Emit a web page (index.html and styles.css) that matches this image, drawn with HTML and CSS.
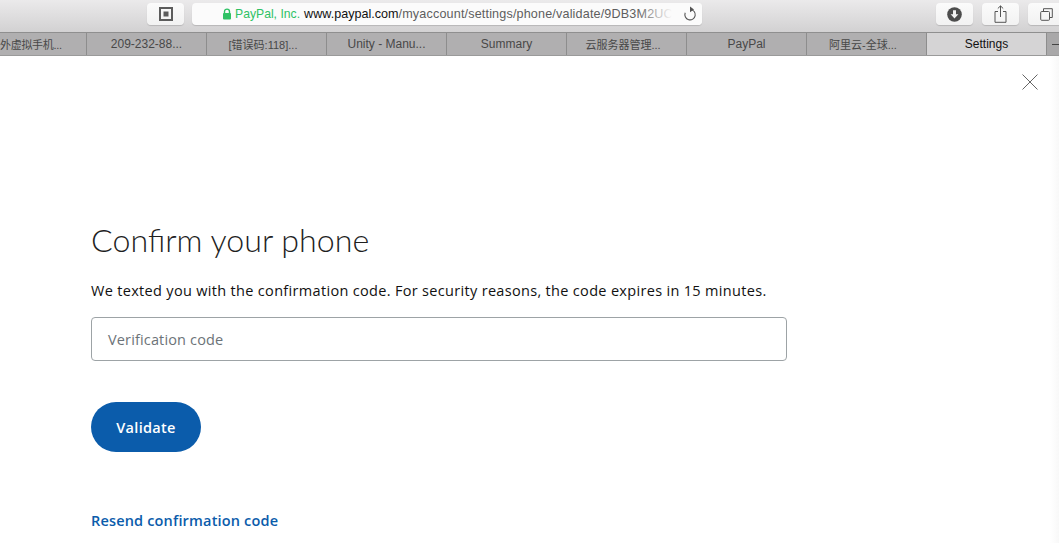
FILE: index.html
```html
<!DOCTYPE html>
<html lang="en">
<head>
<meta charset="utf-8">
<title>Settings</title>
<link rel="stylesheet" href="styles.css">
</head>
<body>
<header class="toolbar">
  <button class="tool sidebar-btn" aria-label="Sidebar">
    <svg width="14" height="14" viewBox="0 0 14 14"><rect x="1" y="1" width="12" height="12" fill="none" stroke="#5c5c5c" stroke-width="2"/><rect x="4.500" y="4.500" width="5" height="5" fill="#5c5c5c"/></svg>
  </button>
  <div class="address">
    <svg class="lock" width="10" height="12" viewBox="0 0 10 12"><path d="M2.500 6V3.600a2.500 2.500 0 0 1 5 0V6" fill="none" stroke="#2fc265" stroke-width="1.400"/><rect x="1" y="5" width="8" height="6.500" rx="1" fill="#2fc265"/></svg>
    <span class="org">PayPal, Inc.</span>
    <span class="url"><b>www.paypal.com</b>/myaccount/settings/phone/validate/9DB3M2UC</span>
    <span class="fade"></span>
    <svg class="reload" width="14" height="16" viewBox="0 0 14 16"><path d="M7.500 3.500a5.200 5.200 0 1 1-5.300 3.300" fill="none" stroke="#555" stroke-width="1.100"/><path d="M7 .6v5.600l4-2.800z" fill="#555"/></svg>
  </div>
  <div class="tools-right">
    <button class="tool" aria-label="Downloads">
      <svg width="15" height="15" viewBox="0 0 15 15"><circle cx="7.500" cy="7.500" r="7.300" fill="#4d4d4d"/><path d="M6 3.200h3v4h2.400L7.500 11.600 3.600 7.200H6z" fill="#f2f2f2"/></svg>
    </button>
    <button class="tool" aria-label="Share">
      <svg width="13" height="18" viewBox="0 0 13 18"><path d="M4 6.500H1v10.800h11V6.500H9M6.500 12V1M3.800 3.500 6.500 .9l2.700 2.600" fill="none" stroke="#555" stroke-width="1"/></svg>
    </button>
    <button class="tool" aria-label="Tabs">
      <svg width="13" height="13" viewBox="0 0 13 13"><path d="M3.500 3V.7h8.800v8.800H9.500" fill="none" stroke="#555" stroke-width="1"/><rect x=".7" y="3.500" width="8.800" height="8.800" rx="1" fill="none" stroke="#555" stroke-width="1"/></svg>
    </button>
  </div>
</header>
<nav class="tabs">
  <div class="tab tab-first tab-cjk">外虚拟手机...</div>
  <div class="tab">209-232-88...</div>
  <div class="tab tab-cjk">[错误码:118]...</div>
  <div class="tab">Unity - Manu...</div>
  <div class="tab">Summary</div>
  <div class="tab tab-cjk">云服务器管理...</div>
  <div class="tab">PayPal</div>
  <div class="tab tab-cjk">阿里云-全球...</div>
  <div class="tab tab-active">Settings</div>
  <div class="tab-plus"><span class="plus-bar"></span></div>
</nav>
<main class="page">
  <svg class="close" width="16" height="16" viewBox="0 0 16 16"><path d="M.5.500l15 15M15.500.500l-15 15" stroke="#666" stroke-width="1" fill="none"/></svg>
  <h1>Confirm your phone</h1>
  <p class="desc">We texted you with the confirmation code. For security reasons, the code expires in 15 minutes.</p>
  <div class="field">Verification code</div>
  <button class="validate">Validate</button>
  <a class="resend" href="#">Resend confirmation code</a>
</main>
</body>
</html>
```
FILE: styles.css
```css
* { box-sizing: border-box; }
html, body { margin: 0; height: 100%; overflow: hidden; }
body { width: 1059px; height: 543px; background: #fff; font-family: "Open Sans", "Noto Sans CJK SC", sans-serif; display: flex; flex-direction: column; }
button { font-family: inherit; border: 0; padding: 0; }

.toolbar { height: 32px; flex: none; display: flex; align-items: flex-start; padding: 3px 0 0 147px; background: linear-gradient(#ebeaeb, #d2d1d2); overflow: hidden; }
.tool { width: 37px; height: 22px; background: linear-gradient(#fbfbfb, #f2f2f2); border-radius: 4px; box-shadow: 0 1px 1px rgba(0,0,0,.15); display: flex; align-items: center; justify-content: center; flex: none; }
.address { width: 510px; height: 22px; margin-left: 8px; flex: none; background: #fbfbfb; border-radius: 4px; box-shadow: 0 1px 1px rgba(0,0,0,.15); display: flex; align-items: center; padding-left: 30px; position: relative; overflow: hidden; font-family: "Liberation Sans", sans-serif; font-size: 12.600px; white-space: nowrap; }
.lock { margin-right: 3px; flex: none; }
.org { color: #2fc265; font-size: 12.200px; margin-right: 4px; }
.url { color: #5e5e5e; letter-spacing: .16px; }
.url b { font-weight: normal; color: #111; letter-spacing: 0; }
.fade { position: absolute; right: 0; top: 0; bottom: 0; width: 65px; background: linear-gradient(90deg, rgba(251,251,251,0), #fbfbfb 54%); }
.reload { position: absolute; right: 5px; top: 3px; }
.tools-right { display: flex; gap: 9px; margin-left: 234px; flex: none; }

.tabs { height: 24px; flex: none; display: flex; background: #a9a8a9; border-top: 1px solid #8f8f8f; border-bottom: 1px solid #9a9a9a; font-family: "Liberation Sans", "Noto Sans CJK SC", sans-serif; font-size: 12px; color: #484848; overflow: hidden; }
.tab { width: 120px; flex: none; border-right: 1px solid #8d8d8d; background: #b0afb0; display: flex; align-items: center; justify-content: center; }
.tab-cjk { font-size: 11px; padding-right: 7px; }
.tab-first { width: 87px; justify-content: flex-start; padding-right: 0; letter-spacing: -.3px; white-space: nowrap; }
.tab-active { background: #d5d4d5; color: #111; }
.tab-plus { flex: 1; background: #a9a8a9; display: flex; align-items: center; justify-content: flex-end; }
.plus-bar { width: 7px; height: 1px; background: #444; }

.page { flex: 1; position: relative; padding: 164px 0 0 91px; background: linear-gradient(90deg, #fff 1050px, #f8f8f8 1059px); color: #1a1a1a; }
.close { position: absolute; left: 1022px; top: 18px; }
h1 { margin: 0; font-family: "Lato", sans-serif; font-weight: 300; font-size: 32.200px; line-height: 40px; color: #1f1f1f; }
.desc { margin: 20px 0 0; font-family: "Open Sans", sans-serif; font-size: 14.500px; line-height: 22px; letter-spacing: .32px; color: #111; }
.field { width: 696px; height: 44px; margin-top: 15px; border: 1px solid #9da3a6; border-radius: 4px; padding-left: 16px; display: flex; align-items: center; font-size: 14.500px; letter-spacing: .15px; color: #6c7378; }
.validate { display: block; width: 110px; height: 50px; margin-top: 41px; border-radius: 25px; background: #0b5cab; color: #fff; font-size: 14.500px; font-weight: 600; letter-spacing: .3px; }
.resend { display: block; margin-top: 59px; font-size: 14.500px; font-weight: 600; letter-spacing: .17px; color: #0b5cab; text-decoration: none; line-height: 20px; }
```
